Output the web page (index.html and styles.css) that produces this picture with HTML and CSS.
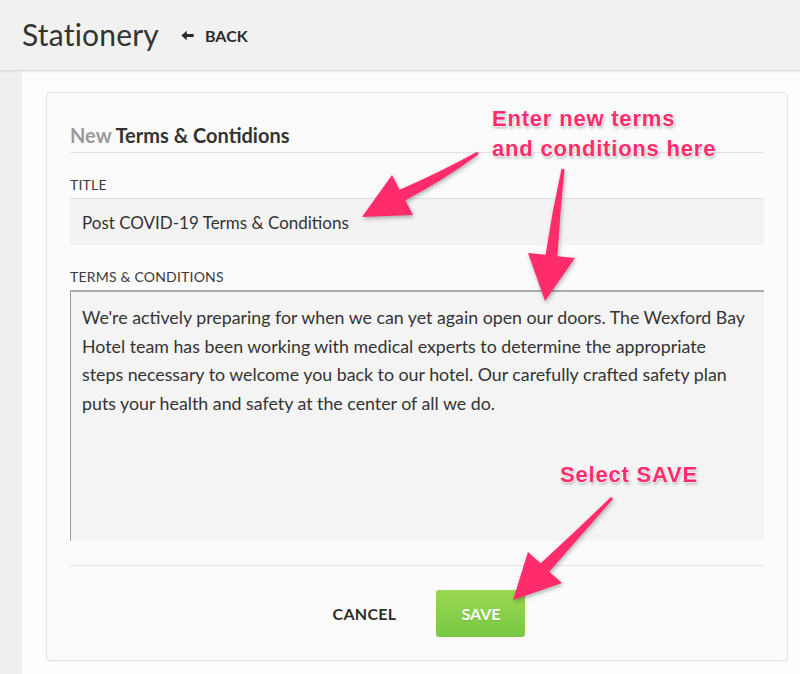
FILE: index.html
```html
<!DOCTYPE html>
<html>
<head>
<meta charset="utf-8">
<link rel="stylesheet" href="styles.css">
</head>
<body>
<header class="topbar">
  <h1 class="page-title">Stationery</h1>
  <a class="back-link">
    <svg class="back-icon" width="13" height="11" viewBox="0 0 13 11"><path d="M0.3 5.5 L5.8 0.8 L5.8 3.9 L12.7 3.9 L12.7 7.1 L5.8 7.1 L5.8 10.2 Z" fill="#2b2b2b"/></svg>
    <span>BACK</span>
  </a>
</header>
<div class="layout">
  <aside class="side"></aside>
  <main class="content">
    <section class="card">
      <h2 class="card-title"><span class="muted">New</span> Terms &amp; Contidions</h2>
      <div class="field">
        <label class="field-label">TITLE</label>
        <div class="input">Post COVID-19 Terms &amp; Conditions</div>
      </div>
      <div class="field">
        <label class="field-label">TERMS &amp; CONDITIONS</label>
        <div class="textarea">We're actively preparing for when we can yet again open our doors. The Wexford Bay Hotel team has been working with medical experts to determine the appropriate steps necessary to welcome you back to our hotel. Our carefully crafted safety plan puts your health and safety at the center of all we do.</div>
      </div>
      <div class="actions">
        <button class="btn-cancel">CANCEL</button>
        <button class="btn-save">SAVE</button>
      </div>
    </section>
  </main>
</div>

<div class="note note-terms">Enter new terms<br>and conditions here</div>
<div class="note note-save">Select SAVE</div>
<svg class="arrows" width="800" height="674" viewBox="0 0 800 674">
  <g fill="#ff2c6c">
    <path d="M477.3 151.7 Q440 172 399.6 189.8 L392 175 L362 217 L413 215 L405.4 200.2 Q444 180 478.7 154.3 Z"/>
    <path d="M561.5 168.8 Q552 212 545.6 254.7 L528 253 L545 301 L575 258 L557.4 256.3 Q560 212 564.5 169.2 Z"/>
    <path d="M610.9 497 Q576 531 540.7 563.3 L528 552 L513 600 L562 583 L549.3 571.7 Q582 534 613.1 499 Z"/>
  </g>
</svg>
</body>
</html>
```
FILE: styles.css
```css
* { box-sizing: border-box; }
html, body { margin: 0; padding: 0; }
body {
  width: 800px;
  height: 674px;
  overflow: hidden;
  font-family: Lato, "Open Sans", sans-serif;
  color: #333;
  background: #fdfdfd;
  position: relative;
}
.topbar {
  height: 71px;
  background: #f1f1f1;
  border-bottom: 1px solid #dadada;
  box-shadow: 0 1px 2px rgba(0,0,0,0.06);
  display: flex;
  align-items: center;
  padding: 0 0 0 22px;
  position: relative;
  z-index: 1;
}
.page-title {
  margin: 0;
  font-size: 30px;
  font-weight: 400;
  color: #333;
  letter-spacing: 0.2px;
  padding-bottom: 2px;
}
.back-link {
  display: flex;
  align-items: center;
  margin-left: 22px;
  font-size: 16px;
  font-weight: 700;
  color: #2b2b2b;
  gap: 11px;
  padding-top: 1px;
}
.layout {
  display: flex;
  height: 603px;
}
.side {
  width: 22px;
  background: #efefef;
  flex: none;
}
.content {
  flex: 1;
  background: #fdfdfd;
  padding: 21px 12px 0 24px;
}
.card {
  background: #fbfbfb;
  border: 1px solid #e3e3e3;
  border-radius: 4px;
  box-shadow: 0 1px 1px rgba(0,0,0,0.04);
  padding: 0 23px 23px 23px;
}
.card-title {
  margin: 0;
  padding: 30px 0 5px 0;
  font-size: 20px;
  line-height: 24px;
  font-weight: 700;
  color: #333;
  border-bottom: 1px solid #e2e2e2;
}
.muted { color: #9a9a9a; font-weight: 700; }
.field { margin-top: 23px; }
.field-label {
  display: block;
  font-size: 14px;
  line-height: 18px;
  color: #3a3a3a;
  margin-bottom: 4px;
  letter-spacing: 0.2px;
}
.input {
  height: 47px;
  background: #f3f3f3;
  border-top: 1px solid #dcdcdc;
  border-radius: 2px;
  padding: 0 12px;
  display: flex;
  align-items: center;
  font-size: 17px;
  color: #333;
}
.textarea {
  height: 251px;
  background: #f4f4f4;
  border-top: 2px solid #adadad;
  border-left: 1px solid #9e9e9e;
  padding: 11px 15px 0 11px;
  font-size: 17.8px;
  line-height: 28.5px;
  color: #333;
}
.actions {
  margin-top: 24px;
  border-top: 1px solid #e2e2e2;
  padding-top: 24px;
  display: flex;
  justify-content: center;
  gap: 16px;
}
.actions button {
  font-family: inherit;
  font-size: 16px;
  font-weight: 700;
  height: 47px;
  border: none;
  border-radius: 3px;
  cursor: pointer;
}
.btn-cancel {
  background: transparent;
  color: #2e2e2e;
  padding: 0 24px;
  letter-spacing: 0.3px;
}
.btn-save {
  width: 89px;
  color: #fff;
  background: linear-gradient(#9bd852, #78c843);
  border-bottom: 1px solid #66b138;
  text-shadow: 0 1px 1px rgba(0,0,0,0.12);
}
.note {
  position: absolute;
  font-family: "Liberation Sans", Arial, sans-serif;
  font-weight: 700;
  font-size: 22px;
  line-height: 30px;
  letter-spacing: 0.8px;
  color: #ff2c6c;
  text-shadow: 0 0 2px #fff, 0 0 2px #fff, 0 0 3px #fff, 1px 2px 3px rgba(0,0,0,0.35);
  z-index: 3;
}
.note-terms { left: 492px; top: 104px; }
.note-save { left: 560px; top: 460px; }
.arrows {
  position: absolute;
  left: 0;
  top: 0;
  z-index: 2;
  filter: drop-shadow(1px 2px 2px rgba(0,0,0,0.3));
  pointer-events: none;
}
```
